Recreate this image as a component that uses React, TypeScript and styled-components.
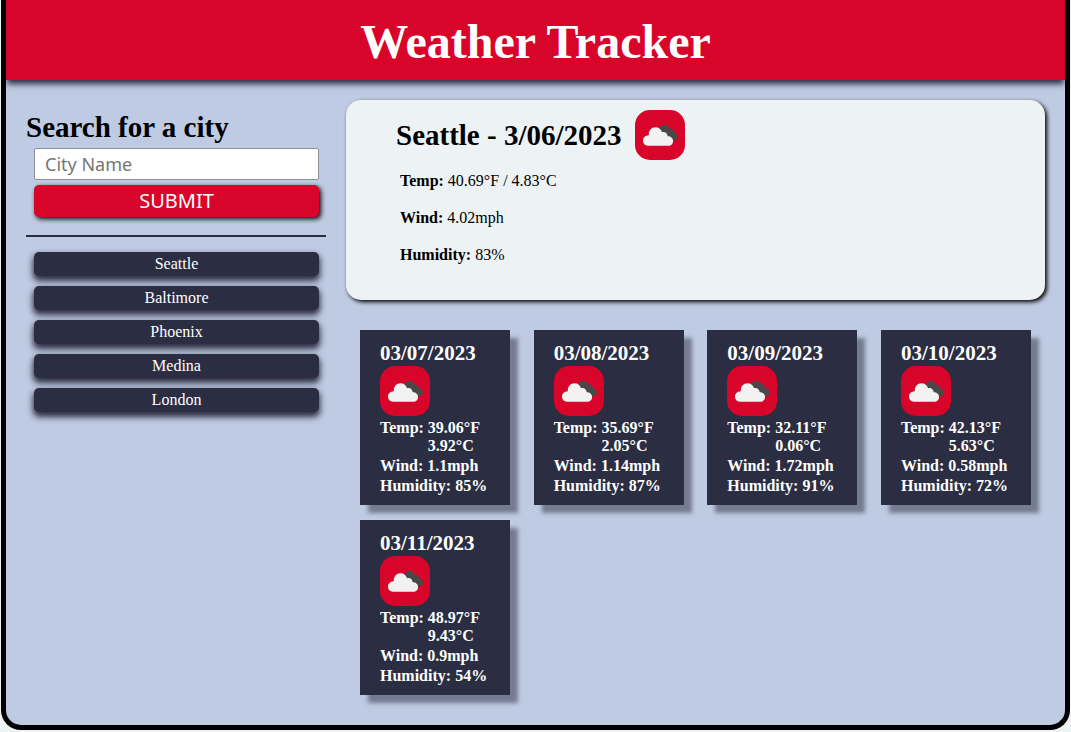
import React from "react";
import styled, { createGlobalStyle } from "styled-components";

const colors = {
  red: "#d90429",
  navy: "#2b2d42",
  mist: "#edf2f4",
  sky: "#bfcbe2",
};

const GlobalStyle = createGlobalStyle`
  *, *::before, *::after { box-sizing: border-box; }
  body {
    margin: 0;
    background: ${colors.mist};
    color: #000;
    font-family: "Liberation Serif", "Times New Roman", serif;
    font-size: 16px;
    line-height: 18px;
  }
  h1, h2, h3, p, ul { margin: 0; padding: 0; }
`;

const Frame = styled.div`
  margin: 0 1px 2px;
  border: 5px solid #000;
  border-top: 0;
  border-radius: 0 0 20px 20px;
  background: ${colors.sky};
`;

const Header = styled.header`
  padding: 14px 20px 10px;
  background: ${colors.red};
  box-shadow: 0 5px 6px -1px ${colors.navy};
  clip-path: inset(0 0 -12px 0);
  color: #fff;
  text-align: center;
`;

const Title = styled.h1`
  font-size: 48px;
  line-height: 56px;
`;

const Content = styled.div`
  display: flex;
  align-items: flex-start;
  gap: 20px;
  padding: 20px 20px 30px;
`;

const Sidebar = styled.aside`
  flex: 0 0 300px;
  min-width: 0;
  padding-top: 10px;
`;

const SearchForm = styled.form`
  display: flex;
  flex-direction: column;
  padding-bottom: 18px;
  border-bottom: 2px solid ${colors.navy};
`;

const SearchLabel = styled.label`
  margin-bottom: 4px;
  font-size: 29px;
  font-weight: bold;
  line-height: 34px;
`;

const CityInput = styled.input`
  min-width: 0;
  height: 32px;
  margin: 0 7px 5px 8px;
  padding: 0 10px;
  border: 1px solid #8f8f9d;
  border-radius: 2px;
  background: #fff;
  font-family: "Noto Sans", sans-serif;
  font-size: 18px;
  &::placeholder { color: #757575; opacity: 1; }
`;

const SubmitButton = styled.button`
  height: 32px;
  margin: 0 7px 0 8px;
  padding: 0;
  border: 0;
  border-radius: 5px;
  background: ${colors.red};
  box-shadow: 2px 2px 5px #000;
  color: #fff;
  font-family: "Noto Sans", sans-serif;
  font-size: 20px;
  line-height: 32px;
`;

const History = styled.ul`
  display: flex;
  flex-direction: column;
  gap: 10px;
  padding: 15px 7px 0 8px;
  list-style: none;
`;

const HistoryButton = styled.button`
  display: block;
  width: 100%;
  height: 24px;
  padding: 0;
  border: 0;
  border-radius: 5px;
  background: ${colors.navy};
  box-shadow: 0 4px 6px 1px ${colors.navy};
  color: #fff;
  font-family: inherit;
  font-size: 16px;
  line-height: 24px;
`;

const Main = styled.main`
  flex: 1;
  min-width: 0;
`;

const Current = styled.section`
  padding: 10px 50px 17px;
  border-radius: 15px;
  background: ${colors.mist};
  box-shadow: 2px 2px 4px #000;
`;

const CurrentHeading = styled.div`
  display: flex;
  align-items: center;
  gap: 13px;
  margin-bottom: 12px;
`;

const CurrentTitle = styled.h2`
  font-size: 29px;
  line-height: 34px;
`;

const CurrentReading = styled.p`
  margin: 0 4px 19px;
`;

const Forecast = styled.section`
  display: grid;
  grid-template-columns: repeat(auto-fill, 150px);
  justify-content: space-between;
  gap: 15px;
  padding: 30px 14px 0;
`;

const Card = styled.article`
  min-height: 175px;
  padding: 10px 20px;
  background: ${colors.navy};
  box-shadow: 8px 8px 4px rgba(43, 45, 66, 0.5);
  color: #fff;
  font-weight: bold;
  white-space: nowrap;
`;

const CardDate = styled.h3`
  font-size: 21px;
  line-height: 26px;
`;

const CardReading = styled.p`
  display: flex;
  gap: 4px;
  margin-top: 2px;
`;

const IconTile = styled.svg`
  display: block;
  flex: none;
  width: 50px;
  height: 50px;
  border-radius: 15px;
  background: ${colors.red};
`;

const CardIcon = styled(IconTile)`
  margin-bottom: 3px;
`;

const Clouds = () => (
  <>
    <path
      d="M24.5 19 C25.3 15.8 28 14.3 30.5 14.8 C32.5 15.2 33.6 16.9 33.8 18.7 C36.5 18.1 38.8 19.8 38.9 22.3 C41.6 22.5 43.2 24.4 42.9 26.8 C42.7 29.2 40.9 30.4 38.6 30.3 L31 27 Z"
      fill="#484848"
    />
    <path
      d="M13 35.8 C9.9 35.8 8 33.4 8 30.6 C8 27.7 10.2 25.5 13.8 25.2 C13.4 20.5 16.5 17.2 20.5 17.2 C23.9 17.2 26.3 19.3 27 22.3 C30 21.5 32.5 23.3 32.7 26.2 C36 26.2 38.1 28.3 38.1 31 C38.1 33.7 36.1 35.8 33.2 35.8 Z"
      fill="#f2f2f2"
    />
  </>
);

const cities = ["Seattle", "Baltimore", "Phoenix", "Medina", "London"];

const forecast = [
  { date: "03/07/2023", f: "39.06", c: "3.92", wind: "1.1", humidity: 85 },
  { date: "03/08/2023", f: "35.69", c: "2.05", wind: "1.14", humidity: 87 },
  { date: "03/09/2023", f: "32.11", c: "0.06", wind: "1.72", humidity: 91 },
  { date: "03/10/2023", f: "42.13", c: "5.63", wind: "0.58", humidity: 72 },
  { date: "03/11/2023", f: "48.97", c: "9.43", wind: "0.9", humidity: 54 },
];

export default function App() {
  return (
    <>
      <GlobalStyle />
      <Frame>
        <Header>
          <Title>Weather Tracker</Title>
        </Header>
        <Content>
          <Sidebar>
            <SearchForm onSubmit={(e: React.FormEvent) => e.preventDefault()}>
              <SearchLabel htmlFor="city">Search for a city</SearchLabel>
              <CityInput id="city" type="text" placeholder="City Name" />
              <SubmitButton type="submit">SUBMIT</SubmitButton>
            </SearchForm>
            <History>
              {cities.map((city) => (
                <li key={city}>
                  <HistoryButton type="button">{city}</HistoryButton>
                </li>
              ))}
            </History>
          </Sidebar>
          <Main>
            <Current>
              <CurrentHeading>
                <CurrentTitle>Seattle - 3/06/2023</CurrentTitle>
                <IconTile viewBox="0 0 50 50" role="img" aria-label="Cloudy">
                  <Clouds />
                </IconTile>
              </CurrentHeading>
              <CurrentReading><b>Temp:</b> 40.69°F / 4.83°C</CurrentReading>
              <CurrentReading><b>Wind:</b> 4.02mph</CurrentReading>
              <CurrentReading><b>Humidity:</b> 83%</CurrentReading>
            </Current>
            <Forecast>
              {forecast.map((day) => (
                <Card key={day.date}>
                  <CardDate>{day.date}</CardDate>
                  <CardIcon viewBox="0 0 50 50" role="img" aria-label="Cloudy">
                    <Clouds />
                  </CardIcon>
                  <CardReading>
                    <span>Temp:</span>
                    <span>{day.f}°F<br />{day.c}°C</span>
                  </CardReading>
                  <CardReading>
                    <span>Wind:</span>
                    <span>{day.wind}mph</span>
                  </CardReading>
                  <CardReading>
                    <span>Humidity:</span>
                    <span>{day.humidity}%</span>
                  </CardReading>
                </Card>
              ))}
            </Forecast>
          </Main>
        </Content>
      </Frame>
    </>
  );
}
